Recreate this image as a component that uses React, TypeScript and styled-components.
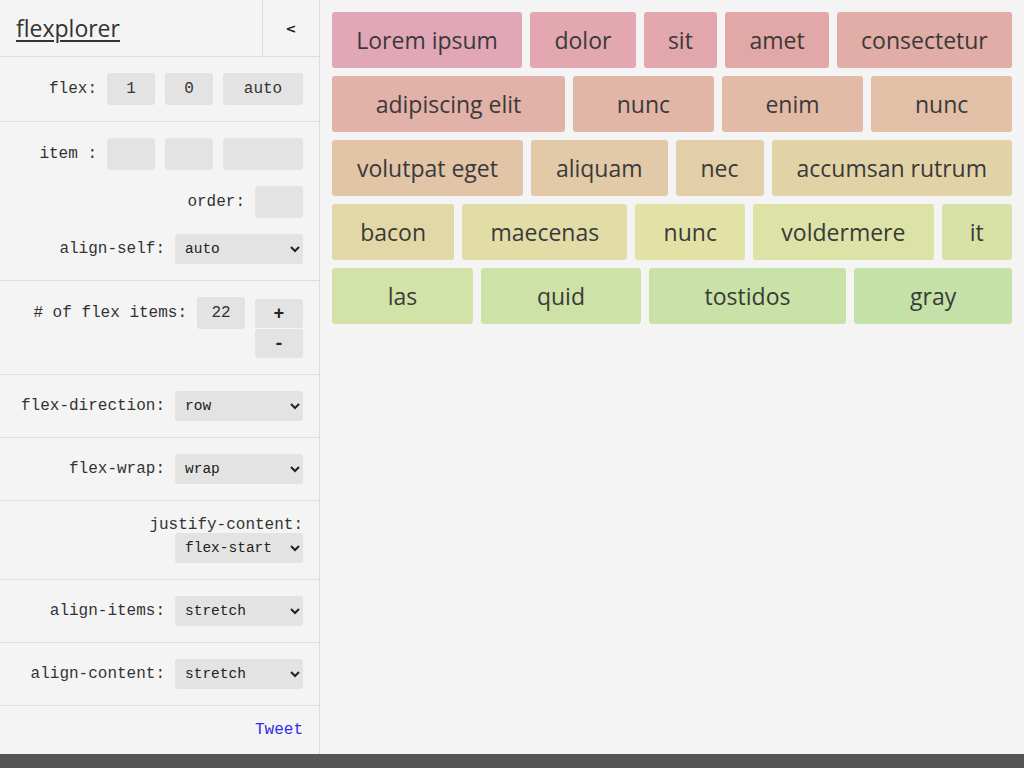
import styled, { createGlobalStyle } from "styled-components";

const GlobalStyle = createGlobalStyle`
  html, body {
    margin: 0;
    padding: 0;
    background: #f4f4f4;
  }
  * {
    box-sizing: border-box;
  }
`;

const words = [
  "Lorem ipsum",
  "dolor",
  "sit",
  "amet",
  "consectetur",
  "adipiscing elit",
  "nunc",
  "enim",
  "nunc",
  "volutpat eget",
  "aliquam",
  "nec",
  "accumsan rutrum",
  "bacon",
  "maecenas",
  "nunc",
  "voldermere",
  "it",
  "las",
  "quid",
  "tostidos",
  "gray"
];

const selects = [
  { label: "flex-direction:", value: "row", options: ["row", "row-reverse", "column", "column-reverse"] },
  { label: "flex-wrap:", value: "wrap", options: ["nowrap", "wrap", "wrap-reverse"] },
  {
    label: "justify-content:",
    value: "flex-start",
    options: ["flex-start", "flex-end", "center", "space-between", "space-around"],
    wrap: true
  },
  { label: "align-items:", value: "stretch", options: ["flex-start", "flex-end", "center", "baseline", "stretch"] },
  {
    label: "align-content:",
    value: "stretch",
    options: ["flex-start", "flex-end", "center", "space-between", "space-around", "stretch"]
  }
];

const App = () => {
  return (
    <Page>
      <GlobalStyle />
      <Body>
        <Sidebar>
          <Header>
            <TitleCell>
              <Title href="#">flexplorer</Title>
            </TitleCell>
            <CollapseButton>&lt;</CollapseButton>
          </Header>

          <Section>
            <Row>
              <Label>flex:</Label>
              <Field defaultValue="1" />
              <Field defaultValue="0" />
              <Field $wide defaultValue="auto" />
            </Row>
          </Section>

          <Section>
            <Row>
              <Label>item :</Label>
              <Field />
              <Field />
              <Field $wide />
            </Row>
            <Row>
              <Label>order:</Label>
              <Field />
            </Row>
            <Row>
              <Label>align-self:</Label>
              <Select defaultValue="auto">
                <option>auto</option>
                <option>flex-start</option>
                <option>flex-end</option>
                <option>center</option>
                <option>stretch</option>
              </Select>
            </Row>
          </Section>

          <Section>
            <Row $top>
              <Label $tall>#&nbsp;of flex items:</Label>
              <Field defaultValue="22" />
              <ButtonStack>
                <StepButton>+</StepButton>
                <StepButton>-</StepButton>
              </ButtonStack>
            </Row>
          </Section>

          {selects.map(s => (
            <Section key={s.label}>
              <Row $wrap={s.wrap}>
                <Label>{s.label}</Label>
                <Select defaultValue={s.value}>
                  {s.options.map(o => (
                    <option key={o}>{o}</option>
                  ))}
                </Select>
              </Row>
            </Section>
          ))}

          <TweetSection>
            <TweetLink href="#">Tweet</TweetLink>
          </TweetSection>
        </Sidebar>

        <Main>
          {words.map((word, index) => (
            <Item key={index} $hue={(345 + index * 5) % 360}>
              {word}
            </Item>
          ))}
        </Main>
      </Body>
      <Footer />
    </Page>
  );
};

const Page = styled.div`
  display: flex;
  flex-direction: column;
  height: 100vh;
  background: #f4f4f4;
`;

const Body = styled.div`
  flex: 1;
  display: flex;
  min-height: 0;
`;

const Sidebar = styled.aside`
  width: 320px;
  flex-shrink: 0;
  border-right: 1px solid #dddddd;
  font-family: "Liberation Mono", "Courier New", monospace;
  color: #333;
`;

const Header = styled.header`
  display: flex;
  height: 57px;
  border-bottom: 1px solid #dddddd;
`;

const TitleCell = styled.div`
  flex: 1;
  display: flex;
  align-items: center;
  padding-left: 16px;
`;

const Title = styled.a`
  font-family: "Open Sans", sans-serif;
  font-size: 23px;
  color: #333;
  text-decoration: underline;
  text-underline-offset: 3px;
  text-decoration-thickness: 2px;
`;

const CollapseButton = styled.div`
  width: 57px;
  border-left: 1px solid #dddddd;
  display: flex;
  align-items: center;
  justify-content: center;
  font-family: "DejaVu Sans", sans-serif;
  font-weight: bold;
  font-size: 13px;
  color: #222;
`;

const Section = styled.section`
  display: flex;
  flex-direction: column;
  gap: 16px;
  padding: 16px;
  border-bottom: 1px solid #dddddd;
`;

const Row = styled.div<{ $wrap?: boolean; $top?: boolean }>`
  display: flex;
  flex-wrap: ${p => (p.$wrap ? "wrap" : "nowrap")};
  justify-content: flex-end;
  align-items: ${p => (p.$top ? "flex-start" : "center")};
  column-gap: 10px;
  row-gap: 0;
`;

const Label = styled.span<{ $tall?: boolean }>`
  font-size: 16px;
  line-height: ${p => (p.$tall ? "32px" : "16px")};
  white-space: nowrap;
  color: #333;
`;

const Field = styled.input<{ $wide?: boolean }>`
  width: ${p => (p.$wide ? "80px" : "48px")};
  height: 32px;
  padding: 0;
  border: none;
  border-radius: 3px;
  background: #e3e3e3;
  font-family: "Liberation Mono", "Courier New", monospace;
  font-size: 16px;
  text-align: center;
  color: #333;
  outline: none;
`;

const Select = styled.select`
  width: 128px;
  height: 30px;
  padding: 0 4px 0 6px;
  border: none;
  border-radius: 3px;
  background: #e3e3e3;
  font-family: "Liberation Mono", "Courier New", monospace;
  font-size: 14.5px;
  color: #222;
  outline: none;
`;

const ButtonStack = styled.div`
  display: flex;
  flex-direction: column;
  gap: 1px;
  margin-top: 2px;
`;

const StepButton = styled.button`
  width: 48px;
  height: 29px;
  padding: 0;
  border: none;
  border-radius: 3px;
  background: #e3e3e3;
  font-family: "Liberation Mono", monospace;
  font-weight: bold;
  font-size: 18px;
  color: #222;
`;

const TweetSection = styled.div`
  display: flex;
  justify-content: flex-end;
  padding: 16px;
  line-height: 16px;
`;

const TweetLink = styled.a`
  font-size: 16px;
  color: #2f2fe8;
  text-decoration: none;
`;

const Main = styled.main`
  flex: 1;
  display: flex;
  flex-wrap: wrap;
  align-content: flex-start;
  gap: 8px;
  padding: 12px;
`;

const Item = styled.div<{ $hue: number }>`
  flex: 1 0 auto;
  padding: 12px 21px;
  line-height: 32px;
  font-family: "Open Sans", sans-serif;
  font-size: 23px;
  text-align: center;
  color: #3a3a3a;
  border-radius: 3px;
  background: hsl(${p => p.$hue}, 50%, 77%);
`;

const Footer = styled.div`
  height: 14px;
  flex-shrink: 0;
  background: #555555;
`;

export default App;
